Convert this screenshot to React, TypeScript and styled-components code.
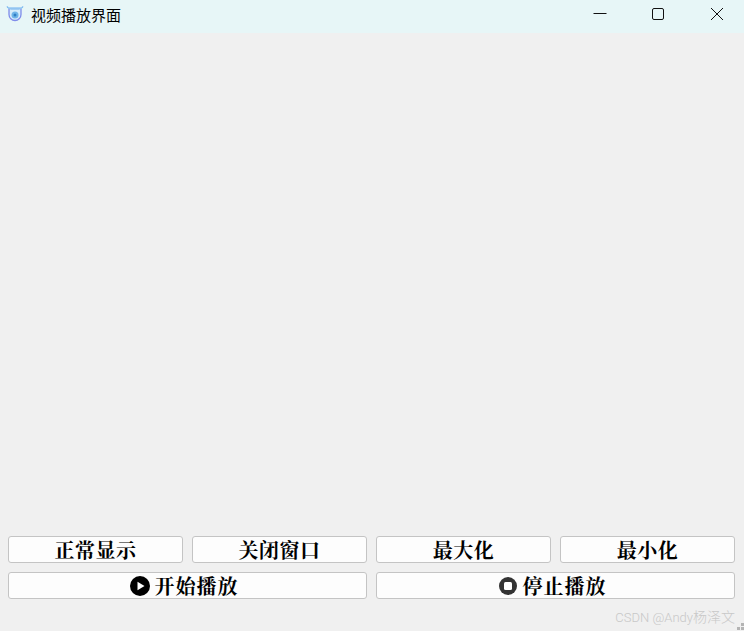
import React from "react";
import styled, { createGlobalStyle } from "styled-components";

const GlobalStyle = createGlobalStyle`
  html, body {
    margin: 0;
    padding: 0;
    background: #f0f0f0;
  }
`;

const AppIcon = () => (
  <svg width="18" height="18" viewBox="0 0 18 18" fill="none">
    <path d="M3 4v5.5a6 6 0 0 0 12 0V4" fill="#d6ecfa" stroke="#7f8cea" strokeWidth="1.3" />
    <path d="M1 1.5c1 1.6 2.5 2.2 4 2.2h8c1.500 0 3-.6 4-2.200" stroke="#6fb0ee" strokeWidth="1.4" />
    <path d="M2.500 2h13v1.600h-13z" fill="#a8d2f4" />
    <circle cx="9" cy="10" r="3.500" fill="#6fb4e8" />
    <circle cx="9" cy="10" r="1.500" fill="#2f7fc4" />
  </svg>
);

const MinIcon = () => (
  <svg width="14" height="14" viewBox="0 0 14 14">
    <path d="M0.500 6.500h13" stroke="#111" strokeWidth="1" />
  </svg>
);

const MaxIcon = () => (
  <svg width="14" height="14" viewBox="0 0 14 14" fill="none">
    <rect x="1.500" y="1.500" width="11" height="11" rx="1.500" stroke="#111" strokeWidth="1" />
  </svg>
);

const CloseIcon = () => (
  <svg width="14" height="14" viewBox="0 0 14 14">
    <path d="M1 1l12 12M13 1L1 13" stroke="#111" strokeWidth="1" />
  </svg>
);

const PlayIcon = () => (
  <svg width="20" height="20" viewBox="0 0 20 20">
    <circle cx="10" cy="10" r="10" fill="#000" />
    <path d="M7.500 5.800v8.400L14.500 10z" fill="#fff" />
  </svg>
);

const StopIcon = () => (
  <svg width="20" height="20" viewBox="0 0 20 20">
    <circle cx="10" cy="10" r="9" fill="#333" />
    <rect x="6" y="6" width="8" height="8" rx="1.500" fill="#fff" />
  </svg>
);

const GripIcon = () => (
  <svg width="7" height="7" viewBox="0 0 7 7">
    <rect x="4" y="0" width="3" height="3" fill="#b4b4b4" />
    <rect x="0" y="4" width="3" height="3" fill="#b4b4b4" />
    <rect x="4" y="4" width="3" height="3" fill="#b4b4b4" />
  </svg>
);

const App: React.FC = () => (
  <Window>
    <GlobalStyle />
    <TitleBar>
      <TitleIcon>
        <AppIcon />
      </TitleIcon>
      <Title>视频播放界面</Title>
      <WinButton>
        <MinIcon />
      </WinButton>
      <WinButton>
        <MaxIcon />
      </WinButton>
      <WinButton>
        <CloseIcon />
      </WinButton>
    </TitleBar>
    <VideoArea />
    <Controls>
      <SmallButton>正常显示</SmallButton>
      <SmallButton>关闭窗口</SmallButton>
      <SmallButton>最大化</SmallButton>
      <SmallButton>最小化</SmallButton>
      <WideButton>
        <PlayIcon />
        开始播放
      </WideButton>
      <WideButton>
        <StopIcon />
        停止播放
      </WideButton>
    </Controls>
    <Footer>
      <Watermark>
        <WatermarkLatin>CSDN @Andy</WatermarkLatin>杨泽文
      </Watermark>
      <GripBox>
        <GripIcon />
      </GripBox>
    </Footer>
  </Window>
);

const Window = styled.div`
  width: 744px;
  height: 631px;
  display: flex;
  flex-direction: column;
  background: #f0f0f0;
  overflow: hidden;
`;

const TitleBar = styled.div`
  box-sizing: border-box;
  height: 33px;
  flex: none;
  display: flex;
  align-items: center;
  background: #e7f6f7;
  padding: 0 0 5px 6px;
`;

const TitleIcon = styled.div`
  width: 18px;
  height: 18px;
  margin-right: 7px;
`;

const Title = styled.div`
  flex: 1;
  font-family: "Noto Sans CJK SC", sans-serif;
  font-size: 15px;
  color: #000;
`;

const WinButton = styled.div`
  width: 58.5px;
  height: 28px;
  display: flex;
  align-items: center;
  justify-content: center;
  position: relative;
  left: 2px;
`;

const VideoArea = styled.div`
  flex: 1;
`;

const Controls = styled.div`
  display: grid;
  grid-template-columns: repeat(4, 175px);
  grid-auto-rows: 27px;
  gap: 9px;
  padding: 0 8px;
`;

const ButtonBase = styled.button`
  box-sizing: border-box;
  padding: 0;
  display: flex;
  align-items: center;
  justify-content: center;
  background: #fdfdfd;
  border: 1px solid #c4c4c4;
  border-radius: 3px;
  color: #000;
  font-family: "Noto Serif CJK SC", "Noto Sans CJK SC", serif;
  font-weight: 700;
`;

const SmallButton = styled(ButtonBase)`
  font-size: 20px;
  letter-spacing: 0.5px;
`;

const WideButton = styled(ButtonBase)`
  grid-column: span 2;
  font-size: 20px;
  letter-spacing: 1px;
  gap: 5px;
  padding-right: 7px;
`;

const Footer = styled.div`
  height: 32px;
  flex: none;
  display: flex;
  align-items: flex-end;
  justify-content: flex-end;
`;

const Watermark = styled.div`
  font-family: "Noto Sans CJK SC", sans-serif;
  font-size: 14px;
  font-weight: 300;
  line-height: 18px;
  color: #c8c8c8;
  margin-right: 2px;
  margin-bottom: 4px;
`;

const WatermarkLatin = styled.span`
  font-family: "Roboto", sans-serif;
  font-size: 13px;
  font-weight: 300;
`;

const GripBox = styled.div`
  width: 7px;
  height: 7px;
  margin-bottom: 1px;
  display: flex;
`;

export default App;
